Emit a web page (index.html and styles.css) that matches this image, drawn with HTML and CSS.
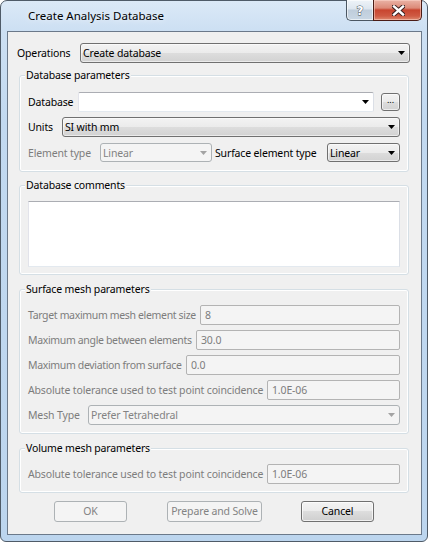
FILE: index.html
```html
<!DOCTYPE html>
<html>
<head>
<meta charset="utf-8">
<link rel="stylesheet" href="styles.css">
</head>
<body>
<div class="window">
  <div class="titlebar">
    <span class="title">Create Analysis Database</span>
    <div class="caption-buttons">
      <div class="cap help"><span class="qmark">?</span></div>
      <div class="cap close">
        <svg width="13" height="11" viewBox="0 0 13 11">
          <path d="M2 1.5 L11 9.5 M11 1.5 L2 9.5" stroke="#3a2020" stroke-width="4.4" stroke-linecap="square" fill="none"/>
          <path d="M2 1.5 L11 9.5 M11 1.5 L2 9.5" stroke="#ffffff" stroke-width="2.4" stroke-linecap="square" fill="none"/>
        </svg>
      </div>
    </div>
  </div>
  <div class="client">
    <div class="row ops">
      <span class="label w-ops">Operations</span>
      <div class="combo grow"><span class="val">Create database</span><svg class="arr" width="7" height="4" viewBox="0 0 7 4"><path d="M0 0H7L3.5 4Z"/></svg></div>
    </div>

    <div class="group g1">
      <div class="legend">Database parameters</div>
      <div class="row first10">
        <span class="label w-db">Database</span>
        <div class="ecombo grow"><span class="val"></span><svg class="arr" width="7" height="4" viewBox="0 0 7 4"><path d="M0 0H7L3.5 4Z"/></svg></div>
        <div class="browse">...</div>
      </div>
      <div class="row gap5">
        <span class="label w-units">Units</span>
        <div class="combo grow"><span class="val">SI with mm</span><svg class="arr" width="7" height="4" viewBox="0 0 7 4"><path d="M0 0H7L3.5 4Z"/></svg></div>
      </div>
      <div class="row gap6 h19">
        <span class="label dis w-el">Element type</span>
        <div class="combo disabled w-elc"><span class="val">Linear</span><svg class="arr" width="7" height="4" viewBox="0 0 7 4"><path d="M0 0H7L3.5 4Z"/></svg></div>
        <span class="label w-sel">Surface element type</span>
        <div class="combo grow"><span class="val">Linear</span><svg class="arr" width="7" height="4" viewBox="0 0 7 4"><path d="M0 0H7L3.5 4Z"/></svg></div>
      </div>
    </div>

    <div class="group g2">
      <div class="legend">Database comments</div>
      <div class="textarea"></div>
    </div>

    <div class="group g3">
      <div class="legend">Surface mesh parameters</div>
      <div class="row first9">
        <span class="label dis tight w-a">Target maximum mesh element size</span>
        <div class="edit grow">8</div>
      </div>
      <div class="row gap5">
        <span class="label dis tight w-b">Maximum angle between elements</span>
        <div class="edit grow">30.0</div>
      </div>
      <div class="row gap5">
        <span class="label dis tight w-c">Maximum deviation from surface</span>
        <div class="edit grow">0.0</div>
      </div>
      <div class="row gap5">
        <span class="label dis w-d">Absolute tolerance used to test point coincidence</span>
        <div class="edit grow">1.0E-06</div>
      </div>
      <div class="row gap5">
        <span class="label dis w-e">Mesh Type</span>
        <div class="combo disabled grow"><span class="val">Prefer Tetrahedral</span><svg class="arr" width="7" height="4" viewBox="0 0 7 4"><path d="M0 0H7L3.5 4Z"/></svg></div>
      </div>
    </div>

    <div class="group g4">
      <div class="legend">Volume mesh parameters</div>
      <div class="row first9">
        <span class="label dis w-d">Absolute tolerance used to test point coincidence</span>
        <div class="edit grow">1.0E-06</div>
      </div>
    </div>

    <div class="buttons">
      <div class="btn disabled w-ok">OK</div>
      <div class="btn disabled w-prep">Prepare and Solve</div>
      <div class="btn w-cancel">Cancel</div>
    </div>
  </div>
</div>
</body>
</html>
```

FILE: styles.css
```css
html, body {
  margin: 0;
  padding: 0;
  background: #ffffff;
}

.window {
  box-sizing: border-box;
  width: 428px;
  height: 542px;
  border: 1px solid #4f5b68;
  border-radius: 7px 7px 6px 6px;
  background: linear-gradient(180deg, #dbe9f7 0px, #cde0f3 28px, #c2d9f0 120px, #bcd5ee 100%);
  padding: 0 5px 6px 6px;
  display: flex;
  flex-direction: column;
  font-family: "Noto Sans", "Open Sans", sans-serif;
  color: #000;
}

.titlebar {
  height: 30px;
  display: flex;
  align-items: flex-start;
  flex: none;
}

.title {
  margin: 7px 0 0 21px;
  font-size: 11.5px;
  line-height: 16px;
  color: #000;
  text-shadow: 0 0 6px rgba(255, 255, 255, 0.9);
}

.caption-buttons {
  margin-left: auto;
  display: flex;
  height: 20px;
  margin-top: -1px;
}

.cap {
  box-sizing: border-box;
  height: 21px;
  border: 1px solid #4b5763;
  border-top: none;
  display: flex;
  align-items: center;
  justify-content: center;
}

.help {
  width: 27px;
  border-right: none;
  border-radius: 0 0 0 5px;
  background: linear-gradient(180deg, #eef3f8 0%, #dde6ef 45%, #bfcddb 50%, #c9d7e4 100%);
  box-shadow: inset 0 0 0 1px rgba(255, 255, 255, 0.6);
}

.qmark {
  font-family: "DejaVu Sans", sans-serif;
  font-weight: bold;
  font-size: 12px;
  line-height: 12px;
  color: #ffffff;
  -webkit-text-stroke: 0.8px #3b4650;
  paint-order: stroke fill;
  margin-top: 1px;
}

.close {
  width: 49px;
  border-color: #4a1c16;
  border-radius: 0 0 5px 0;
  background: linear-gradient(180deg, #eab3a6 0%, #dc8a78 40%, #c8452f 50%, #cf5a43 80%, #de8a70 100%);
  box-shadow: inset 0 0 0 1px rgba(255, 220, 210, 0.5);
}

.close svg {
  margin-top: 1px;
  margin-left: 2px;
}

.client {
  box-sizing: border-box;
  width: 415px;
  height: 504px;
  border: 1px solid #6b798a;
  background: #f0f0f0;
  display: flex;
  flex-direction: column;
  flex: none;
}

.row {
  display: flex;
  align-items: center;
  height: 20px;
  flex: none;
}

.row.h19 { height: 19px; }
.row.gap5 { margin-top: 5px; }
.row.gap6 { margin-top: 6px; }
.row.first10 { margin-top: 10px; }
.row.first9 { margin-top: 9px; }

.ops {
  margin: 11px 11px 0 9px;
}

.label {
  font-size: 10.5px;
  letter-spacing: -0.15px;
  white-space: nowrap;
  flex: none;
  line-height: 14px;
}

.label.tight { letter-spacing: -0.34px; }

.label.dis { color: #7d7d7d; }

.w-ops { width: 63px; }
.w-db { width: 50px; }
.w-units { width: 34px; }
.w-el { width: 72px; }
.w-sel { width: 115px; padding-left: 3px; box-sizing: border-box; }
.w-a { width: 172px; }
.w-b { width: 168px; }
.w-c { width: 158px; }
.w-d { width: 239px; }
.w-e { width: 60px; }

.grow { flex: 1 1 auto; min-width: 0; }

.combo, .ecombo, .edit {
  box-sizing: border-box;
  height: 100%;
  display: flex;
  align-items: center;
  font-size: 10.5px;
  letter-spacing: -0.15px;
  white-space: nowrap;
}

.combo {
  border: 1px solid #707070;
  border-radius: 3px;
  background: linear-gradient(180deg, #f3f3f3 0%, #ebebeb 50%, #dddddd 50%, #d2d2d2 100%);
  padding: 0 4px 0 2px;
  justify-content: space-between;
  box-shadow: inset 0 0 0 1px rgba(255, 255, 255, 0.55);
}

.combo .arr { fill: #000; flex: none; }

.combo.disabled {
  border-color: #adb2b5;
  background: #f4f4f4;
  box-shadow: none;
  color: #838383;
}

.combo.disabled .arr { fill: #a3a3a3; }

.w-elc { width: 112px; flex: none; }

.ecombo {
  border: 1px solid;
  border-color: #abadb3 #dbdfe6 #e3e9ef #e2e3ea;
  border-radius: 2px;
  background: #ffffff;
  padding: 0 4px 0 3px;
  justify-content: space-between;
}

.ecombo .arr { fill: #000; flex: none; }

.browse {
  box-sizing: border-box;
  width: 19px;
  height: 18px;
  margin-left: 7px;
  flex: none;
  border: 1px solid #707070;
  border-radius: 3px;
  background: linear-gradient(180deg, #f3f3f3 0%, #ebebeb 50%, #dddddd 50%, #d2d2d2 100%);
  box-shadow: inset 0 0 0 1px rgba(255, 255, 255, 0.6);
  font-size: 9px;
  line-height: 12px;
  text-align: center;
  color: #000;
  letter-spacing: 0;
}

.edit {
  border: 1px solid #b3b3b3;
  border-radius: 2px;
  background: #f4f4f4;
  color: #7d7d7d;
  padding: 0 4px;
}

.group {
  box-sizing: border-box;
  margin: 0 12px 0 11px;
  border: 1px solid #d5dfe5;
  border-radius: 3px;
  box-shadow: inset 0 0 0 1px #ffffff;
  padding: 0 8px;
  display: flex;
  flex-direction: column;
  flex: none;
}

.legend {
  align-self: flex-start;
  margin: -8px 0 0 -3px;
  padding: 0 1px;
  height: 14px;
  line-height: 14px;
  font-size: 10.5px;
  letter-spacing: -0.15px;
  background: #f0f0f0;
  white-space: nowrap;
}

.g1 { margin-top: 12px; padding-bottom: 9px; }
.g2 { margin-top: 13px; padding-bottom: 7px; }
.g3 { margin-top: 14px; padding-bottom: 8px; }
.g4 { margin-top: 14px; padding-bottom: 8px; }

.textarea {
  box-sizing: border-box;
  margin-top: 9px;
  height: 66px;
  border: 1px solid;
  border-color: #abadb3 #dbdfe6 #e3e9ef #e2e3ea;
  background: #ffffff;
}

.buttons {
  display: flex;
  margin: 8px 0 0 46px;
  height: 21px;
  flex: none;
}

.btn {
  box-sizing: border-box;
  height: 21px;
  border: 1px solid #707070;
  border-radius: 3px;
  background: linear-gradient(180deg, #f3f3f3 0%, #ebebeb 50%, #dddddd 50%, #cfcfcf 100%);
  box-shadow: inset 0 0 0 1px rgba(255, 255, 255, 0.7);
  font-size: 10.5px;
  letter-spacing: -0.15px;
  line-height: 19px;
  text-align: center;
  white-space: nowrap;
}

.btn.disabled {
  border-color: #adb2b5;
  background: #f4f4f4;
  box-shadow: none;
  color: #838383;
}

.w-ok { width: 73px; }
.w-prep { width: 95px; margin-left: 40px; }
.w-cancel { width: 73px; margin-left: 39px; }
```
